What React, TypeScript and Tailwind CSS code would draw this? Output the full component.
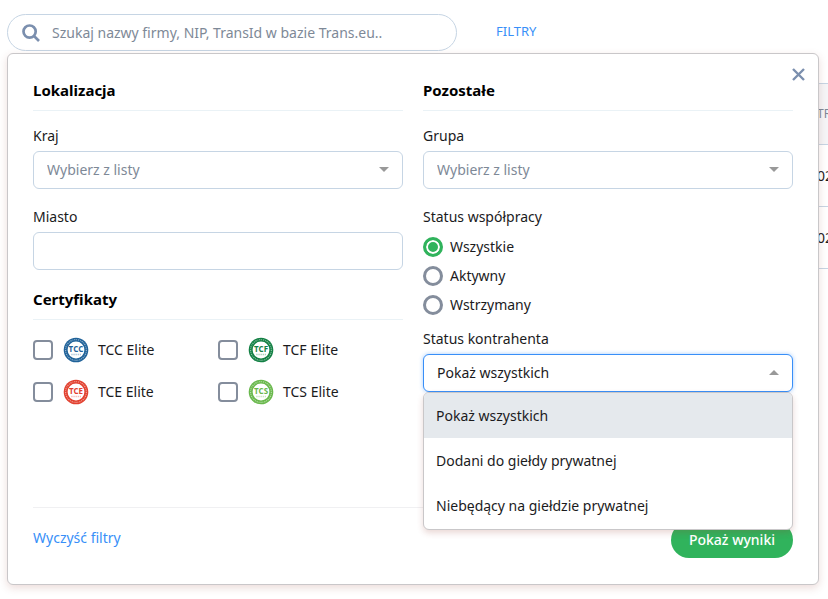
import React, { useState } from 'react';

const CERTIFICATES = [
  { id: 'tcc', code: 'TCC', color: '#1f6299' },
  { id: 'tcf', code: 'TCF', color: '#138044' },
  { id: 'tce', code: 'TCE', color: '#e2402f' },
  { id: 'tcs', code: 'TCS', color: '#69b84c' },
];

const COOPERATION = ['Wszystkie', 'Aktywny', 'Wstrzymany'];

const CONTRACTOR = ['Pokaż wszystkich', 'Dodani do giełdy prywatnej', 'Niebędący na giełdzie prywatnej'];

const Seal: React.FC<{ code: string; color: string }> = ({ code, color }) => (
  <svg width="26" height="26" viewBox="0 0 26 26" aria-hidden="true" className="shrink-0">
    <circle cx="13" cy="13" r="12.3" fill={color} />
    <circle cx="13" cy="13" r="10.4" fill="none" stroke="#fff" strokeOpacity="0.5" strokeWidth="1.2" strokeDasharray="1.2 1 0.8 0.9" />
    <circle cx="13" cy="13" r="8.4" fill="#fff" />
    <text x="13" y="15" textAnchor="middle" fontSize="8" fontWeight="700" fontFamily="Open Sans, sans-serif" fill={color}>
      {code}
    </text>
    <path d="M8.4 17.5h9.4" stroke={color} strokeOpacity="0.45" strokeWidth="1.3" strokeDasharray="1.1 1" />
  </svg>
);

const Caret: React.FC<{ up?: boolean }> = ({ up }) => (
  <svg width="10" height="5" viewBox="0 0 10 5" aria-hidden="true" className="pointer-events-none absolute top-4 right-3.5 fill-[#999]">
    <path d={up ? 'M0 5L5 0L10 5Z' : 'M0 0L5 5L10 0Z'} />
  </svg>
);

const SectionTitle: React.FC<{ children: React.ReactNode }> = ({ children }) => (
  <h2 className="border-b border-[#eaf2f6] pb-[9px] text-[15px] leading-[22px] font-bold text-black">{children}</h2>
);

const SelectField: React.FC<{ id: string; label: string }> = ({ id, label }) => (
  <div className="mt-[15px]">
    <label htmlFor={id} className="block leading-5">{label}</label>
    <div className="relative mt-[5px]">
      <select id={id} className="block h-[38px] w-full appearance-none rounded-md border border-[#c6d5e4] bg-white px-[13px] text-[#7e8997]">
        <option>Wybierz z listy</option>
      </select>
      <Caret />
    </div>
  </div>
);

const FilterPanel: React.FC = () => {
  const [status, setStatus] = useState(COOPERATION[0]);
  const [contractor, setContractor] = useState(CONTRACTOR[0]);

  return (
    <section className="absolute top-[53px] right-[9px] left-[7px] rounded-md border border-[#c9c7c9] bg-white px-[25px] pt-[25px] pb-[26px] shadow-[0_3px_8px_rgba(150,60,50,0.18)]">
      <button type="button" aria-label="Zamknij" className="absolute top-3.5 right-[13px] text-[#7b8fae]">
        <svg width="13" height="13" viewBox="0 0 13 13" fill="none" stroke="currentColor" strokeWidth="2.4">
          <path d="M1 1L12 12M12 1L1 12" />
        </svg>
      </button>

      <div className="grid grid-cols-2 gap-5">
        <div>
          <SectionTitle>Lokalizacja</SectionTitle>
          <SelectField id="country" label="Kraj" />
          <label htmlFor="city" className="mt-[18px] block leading-5">Miasto</label>
          <input id="city" type="text" className="mt-[5px] block h-[38px] w-full rounded-md border border-[#c6d5e4] px-[13px]" />

          <div className="mt-[18px]">
            <SectionTitle>Certyfikaty</SectionTitle>
          </div>
          <div className="mt-[9px] grid grid-cols-2">
            {CERTIFICATES.map((cert) => (
              <label key={cert.id} className="flex h-[42px] items-center">
                <input type="checkbox" className="mr-2.5 size-5 appearance-none rounded-[4px] border-2 border-[#848d9c] checked:bg-[#30b35c]" />
                <Seal code={cert.code} color={cert.color} />
                <span className="ml-[9px]">{cert.code} Elite</span>
              </label>
            ))}
          </div>
        </div>

        <div>
          <SectionTitle>Pozostałe</SectionTitle>
          <SelectField id="group" label="Grupa" />

          <fieldset className="mt-[18px]">
            <legend className="leading-5">Status współpracy</legend>
            <div className="mt-[5px]">
              {COOPERATION.map((name) => (
                <label key={name} className="flex h-[29px] items-center gap-[7px]">
                  <input
                    type="radio"
                    name="cooperation"
                    checked={status === name}
                    onChange={() => setStatus(name)}
                    className="size-5 appearance-none rounded-full border-[3px] border-[#848d9c] checked:border-[#30b35c] checked:bg-[#30b35c] checked:shadow-[inset_0_0_0_2px_white]"
                  />
                  {name}
                </label>
              ))}
            </div>
          </fieldset>

          <label htmlFor="contractor" className="mt-2.5 block leading-5">Status kontrahenta</label>
          <div className="relative mt-[5px]">
            <select
              id="contractor"
              value={contractor}
              onChange={(e) => setContractor(e.target.value)}
              className="block h-[38px] w-full appearance-none rounded-md border border-[#388ff8] bg-white px-[13px] shadow-[0_0_4px_rgba(56,143,248,0.45)]"
            >
              {CONTRACTOR.map((name) => (
                <option key={name}>{name}</option>
              ))}
            </select>
            <Caret up />
            <ul role="listbox" aria-label="Status kontrahenta" className="absolute top-full right-0 left-0 z-10 overflow-hidden rounded-md border border-[#c9c7c9] bg-white pb-px shadow-[0_3px_6px_rgba(150,60,50,0.2)]">
              {CONTRACTOR.map((name) => (
                <li
                  key={name}
                  role="option"
                  aria-selected={contractor === name}
                  onClick={() => setContractor(name)}
                  className="flex h-[45px] items-center px-3 aria-selected:bg-[#e5e9ed]"
                >
                  {name}
                </li>
              ))}
            </ul>
          </div>
        </div>
      </div>

      <footer className="mt-[94px] flex items-start justify-between border-t border-[#f0f0f2] pt-3.5">
        <a href="#clear" className="leading-8 text-[#388ff8]">Wyczyść filtry</a>
        <button type="submit" className="h-9 rounded-full bg-[#30b35c] px-[18px] font-medium text-white">Pokaż wyniki</button>
      </footer>
    </section>
  );
};

const App: React.FC = () => (
  <div className="relative min-h-screen overflow-hidden bg-white font-['Noto_Sans',sans-serif] text-sm text-[#1b1b1d]">
    <header className="flex pt-3.5 pl-[7px]">
      <label className="flex h-[37px] w-full max-w-[450px] items-center gap-3 rounded-full border border-[#c6d5e4] pr-4 pl-3.5">
        <svg width="18" height="18" viewBox="0 0 18 18" fill="none" stroke="#7b8fae" strokeWidth="2.7" aria-hidden="true">
          <circle cx="7.6" cy="7.6" r="6.1" />
          <path d="M12 12L17 17" />
        </svg>
        <input
          type="search"
          aria-label="Szukaj"
          placeholder="Szukaj nazwy firmy, NIP, TransId w bazie Trans.eu.."
          className="min-w-0 flex-1 outline-none placeholder:text-[#7e8997]"
        />
      </label>
      <a href="#filters" className="ml-[39px] pt-[7px] text-[13px] leading-5 text-[#388ff8]">FILTRY</a>
    </header>

    {/* Results list, mostly covered while the filters are open */}
    <div className="mt-8 pl-2">
      <table className="w-full table-fixed">
        <thead>
          <tr className="h-[61px] border-y border-[#c6d5e4] bg-[#f5f5f7] text-left text-xs text-[#7e8997]">
            <th></th>
            <th className="w-[11px] font-normal whitespace-nowrap">TR</th>
          </tr>
        </thead>
        <tbody>
          {[1, 2].map((row) => (
            <tr key={row} className="h-[62px] border-b border-[#c6d5e4]">
              <td></td>
              <td className="whitespace-nowrap">02</td>
            </tr>
          ))}
        </tbody>
      </table>
    </div>

    <FilterPanel />
  </div>
);

export default App;
